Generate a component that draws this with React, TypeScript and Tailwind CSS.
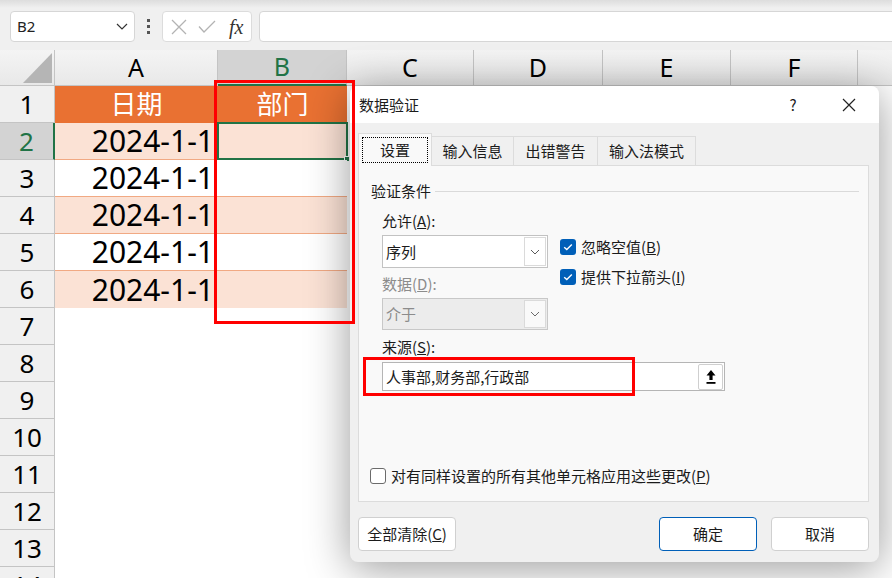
import React from "react";

const cols = [
  { name: "A", w: "w-[163px]" },
  { name: "B", w: "w-[129px]" },
  { name: "C", w: "w-[127px]" },
  { name: "D", w: "w-[129px]" },
  { name: "E", w: "w-[128px]" },
  { name: "F", w: "w-[127px]" },
];

function SmallChevron({ color = "#5a5a5a" }: { color?: string }) {
  return (
    <svg width="10" height="6" viewBox="0 0 10 6">
      <path d="M1 1 L5 5 L9 1" fill="none" stroke={color} strokeWidth="1" />
    </svg>
  );
}

function Checked() {
  return (
    <div className="w-[16px] h-[16px] rounded-[3px] bg-[#005fb8] flex items-center justify-center shrink-0">
      <svg width="12" height="12" viewBox="0 0 12 12">
        <path d="M2.2 6.2 L4.8 8.6 L9.8 3.4" fill="none" stroke="white" strokeWidth="1.4" />
      </svg>
    </div>
  );
}

function App() {
  const rows = Array.from({ length: 14 }, (_, i) => i + 1);

  return (
    <div className="relative w-[892px] h-[578px] overflow-hidden bg-white font-['Noto_Sans','Noto_Sans_CJK_SC',sans-serif]">
      {/* formula bar */}
      <div className="h-[50px] bg-linear-to-b from-[#dddddd] via-[#f0f0f0] via-[16%] to-[#f0f0f0] flex items-start pt-[11px] pl-[10px]">
        <div className="w-[125px] h-[31px] shrink-0 bg-white border border-[#d6d6d6] rounded-[4px] flex items-center justify-between pl-[6px] pr-[6px]">
          <span className="text-[15px] text-[#222]">B2</span>
          <svg width="12" height="7" viewBox="0 0 12 7">
            <path d="M1 1 L6 6 L11 1" fill="none" stroke="#333" strokeWidth="1.2" />
          </svg>
        </div>
        <div className="w-[27px] h-[31px] shrink-0 flex flex-col items-center justify-center gap-[3px]">
          <div className="w-[3px] h-[3px] bg-[#555]" />
          <div className="w-[3px] h-[3px] bg-[#555]" />
          <div className="w-[3px] h-[3px] bg-[#555]" />
        </div>
        <div className="w-[90px] h-[31px] shrink-0 bg-white border border-[#dcdcdc] rounded-[4px] flex items-center pl-[8px]">
          <svg width="16" height="16" viewBox="0 0 16 16">
            <path d="M1 1 L15 15 M15 1 L1 15" stroke="#b3b3b3" strokeWidth="1.3" />
          </svg>
          <svg width="18" height="14" viewBox="0 0 18 14" className="ml-[11px]">
            <path d="M1 6.5 L6 12 L17 1" fill="none" stroke="#b3b3b3" strokeWidth="1.3" />
          </svg>
          <span className="ml-[13px] text-[20px] italic font-['Liberation_Serif',serif] text-[#333] leading-none">
            fx
          </span>
        </div>
        <div className="ml-[7px] w-[700px] h-[31px] shrink-0 bg-white border border-[#d6d6d6] rounded-[4px]" />
      </div>

      {/* column headers */}
      <div className="flex h-[36px] bg-linear-to-b from-[#f4f4f4] to-[#e8e8e8]">
        <div className="w-[55px] shrink-0 relative border-r border-b border-[#c4c4c4]">
          <svg width="55" height="36" viewBox="0 0 55 36" className="absolute inset-0">
            <polygon points="52,3 52,33 23,33" fill="#b5b5b5" />
          </svg>
        </div>
        {cols.map((c) =>
          c.name === "B" ? (
            <div
              key={c.name}
              className={`${c.w} shrink-0 flex items-center justify-center text-[25px] bg-[#d3d3d3] text-[#217346] border-r border-r-[#c4c4c4] border-b-2 border-b-[#217346]`}
            >
              {c.name}
            </div>
          ) : (
            <div
              key={c.name}
              className={`${c.w} shrink-0 flex items-center justify-center text-[25px] text-black border-r border-b border-[#c4c4c4]`}
            >
              {c.name}
            </div>
          )
        )}
        <div className="flex-1 border-b border-[#c4c4c4]" />
      </div>

      {/* rows */}
      {rows.map((r) => {
        const shaded = r === 2 || r === 4 || r === 6;
        const line = r >= 2 && r <= 5 ? "border-b border-[#f1a983]" : "";
        const fill = r === 1 ? "bg-[#e97132]" : shaded ? "bg-[#fbe2d5]" : "bg-white";
        return (
          <div key={r} className="flex h-[37px]">
            {r === 2 ? (
              <div className="w-[55px] shrink-0 flex items-center justify-center text-[26px] bg-[#d3d3d3] text-[#217346] border-b border-b-[#c4c4c4] border-r-2 border-r-[#217346]">
                {r}
              </div>
            ) : (
              <div className="w-[55px] shrink-0 flex items-center justify-center text-[26px] bg-[#f0f0f0] text-black border-b border-r border-[#c4c4c4]">
                {r}
              </div>
            )}
            {r === 1 ? (
              <>
                <div className={`w-[163px] shrink-0 flex items-center justify-center text-[26px] text-white ${fill}`}>
                  日期
                </div>
                <div className={`w-[129px] shrink-0 flex items-center justify-center text-[26px] text-white ${fill}`}>
                  部门
                </div>
              </>
            ) : r <= 6 ? (
              <>
                <div className={`w-[163px] shrink-0 flex items-center justify-end pr-[4px] text-[30px] leading-none text-black ${fill} ${line}`}>
                  2024-1-1
                </div>
                <div className={`w-[129px] shrink-0 relative ${fill} ${line}`}>
                  {r === 2 && (
                    <div className="absolute -left-[1px] -top-[1px] -right-[1px] -bottom-[1px] border-2 border-[#217346]">
                      <div className="absolute -right-[4px] -bottom-[4px] w-[6px] h-[6px] bg-[#217346] border border-white" />
                    </div>
                  )}
                </div>
              </>
            ) : null}
            <div className="flex-1" />
          </div>
        );
      })}

      {/* data validation dialog */}
      <div className="absolute left-[350px] top-[86px] w-[529px] h-[476px] rounded-[8px] bg-[#f0f0f0] shadow-[0_6px_44px_rgba(0,0,0,0.4)] overflow-hidden flex flex-col font-['Noto_Sans_CJK_SC','Noto_Sans',sans-serif] text-[15px] leading-[20px] text-[#1b1b1b]">
        <div className="h-[37px] shrink-0 bg-white flex items-center pl-[9px]">
          <span>数据验证</span>
          <div className="ml-auto flex items-center pr-[2px]">
            <div className="w-[56px] flex justify-center">?</div>
            <div className="w-[56px] flex justify-center">
              <svg width="14" height="14" viewBox="0 0 14 14">
                <path d="M1 1 L13 13 M13 1 L1 13" stroke="#222" strokeWidth="1.2" />
              </svg>
            </div>
          </div>
        </div>

        <div className="pl-[8px] pt-[10px] pr-[10px]">
          {/* tabs */}
          <div className="flex items-end h-[32px]">
            <div className="relative z-10 w-[74px] h-[33px] -mb-[1px] bg-[#f9f9f9] border border-b-0 border-[#dcdcdc] p-[3px]">
              <div className="w-full h-full border border-dotted border-black flex items-center justify-center">
                设置
              </div>
            </div>
            <div className="w-[83px] h-[29px] -ml-[1px] border border-b-0 border-[#dcdcdc] flex items-center justify-center">
              输入信息
            </div>
            <div className="w-[85px] h-[29px] -ml-[1px] border border-b-0 border-[#dcdcdc] flex items-center justify-center">
              出错警告
            </div>
            <div className="w-[99px] h-[29px] -ml-[1px] border border-b-0 border-[#dcdcdc] flex items-center justify-center">
              输入法模式
            </div>
          </div>

          {/* panel */}
          <div className="h-[337px] bg-[#f9f9f9] border border-[#dcdcdc] flex flex-col">
            <div className="mt-[15px] h-[20px] flex items-center pl-[12px] pr-[9px]">
              <span>验证条件</span>
              <div className="ml-[4px] flex-1 h-px bg-[#dadada]" />
            </div>

            <div className="mt-[10px] flex pl-[23px]">
              <div className="w-[166px] flex flex-col">
                <div className="h-[20px]">
                  允许(<span className="underline">A</span>):
                </div>
                <div className="mt-[4px] h-[33px] border border-[#c2c2c2] bg-white flex items-center">
                  <span className="flex-1 pl-[3px]">序列</span>
                  <div className="w-[22px] h-[29px] mr-[1px] border border-[#dadada] bg-white flex items-center justify-center">
                    <SmallChevron />
                  </div>
                </div>
                <div className="mt-[6px] h-[20px] text-[#8c8c8c]">
                  数据(<span className="underline">D</span>):
                </div>
                <div className="mt-[4px] h-[32px] border border-[#c8c8c8] bg-[#ececec] flex items-center text-[#8c8c8c]">
                  <span className="flex-1 pl-[3px]">介于</span>
                  <div className="w-[22px] h-[28px] mr-[1px] border border-[#dadada] bg-[#f9f9f9] flex items-center justify-center">
                    <SmallChevron color="#6a6a6a" />
                  </div>
                </div>
                <div className="mt-[7px] h-[20px]">
                  来源(<span className="underline">S</span>):
                </div>
              </div>
              <div className="ml-[12px] pt-[26px] flex flex-col">
                <div className="h-[20px] flex items-center gap-[5px]">
                  <Checked />
                  <span>
                    忽略空值(<span className="underline">B</span>)
                  </span>
                </div>
                <div className="mt-[10px] h-[20px] flex items-center gap-[5px]">
                  <Checked />
                  <span>
                    提供下拉箭头(<span className="underline">I</span>)
                  </span>
                </div>
              </div>
            </div>

            <div className="mt-[5px] pl-[23px]">
              <div className="w-[343px] h-[29px] border border-[#b5b5b5] bg-white flex items-center pl-[3px]">
                <span className="flex-1">人事部,财务部,行政部</span>
                <div className="w-[25px] h-[26px] mr-[1px] border border-[#cfcfcf] rounded-[2px] bg-white flex items-center justify-center">
                  <svg width="10" height="16" viewBox="0 0 10 16">
                    <polygon points="5,1 9.5,6.5 6.6,6.5 6.6,11 3.4,11 3.4,6.5 0.5,6.5" fill="#000" />
                    <rect x="0.5" y="13" width="9" height="1.8" fill="#000" />
                  </svg>
                </div>
              </div>
            </div>

            <div className="mt-auto mb-[15px] h-[20px] pl-[11px] flex items-center gap-[5px]">
              <div className="w-[16px] h-[16px] rounded-[3px] border border-[#6b6b6b] bg-white shrink-0" />
              <span>
                对有同样设置的所有其他单元格应用这些更改(<span className="underline">P</span>)
              </span>
            </div>
          </div>

          {/* buttons */}
          <div className="mt-[15px] flex">
            <div className="w-[98px] h-[34px] rounded-[4px] border border-[#d0d0d0] bg-white flex items-center justify-center">
              全部清除(<span className="underline">C</span>)
            </div>
            <div className="ml-auto w-[98px] h-[34px] rounded-[4px] border border-[#005fb8] bg-white flex items-center justify-center">
              确定
            </div>
            <div className="ml-[14px] w-[98px] h-[34px] rounded-[4px] border border-[#d0d0d0] bg-white flex items-center justify-center">
              取消
            </div>
          </div>
        </div>
      </div>

      {/* red highlight frames */}
      <div className="absolute left-[214px] top-[80px] w-[141px] h-[244px] border-[3px] border-[#ff0000] z-20" />
      <div className="absolute left-[363px] top-[357px] w-[272px] h-[39px] border-[3px] border-[#ff0000] z-20" />
    </div>
  );
}

export default App;
